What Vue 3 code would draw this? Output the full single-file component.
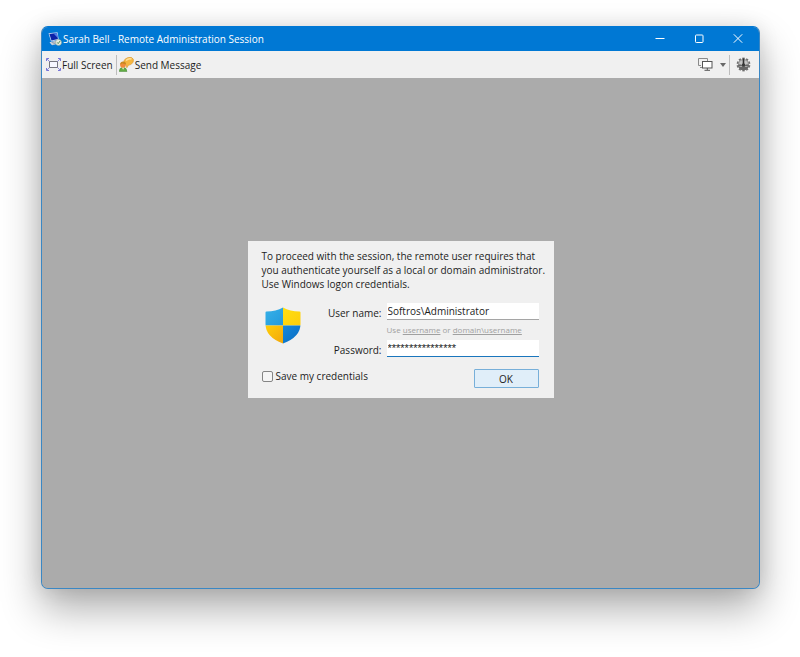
<script setup>
import { ref } from 'vue'

const userName = ref('Softros\\Administrator')
const password = ref('****************')
const save = ref(false)
const teeth = [0, 36, 72, 108, 144, 180, 216, 252, 288, 324]
</script>

<template>
  <main class="desktop">
    <section class="window">
      <header class="titlebar">
        <svg class="app-icon" viewBox="0 0 14 14" aria-hidden="true">
          <path d="M.5 1.200L9.500.3l1.300 7.400L3 9.400z" fill="#c9dcf3" />
          <path d="M1.400 1.900l7.500-.8 1 5.900L3.500 8.400z" fill="#0d22a8" />
          <path d="M5.500 1.500l3.400-.4.900 5z" fill="#4f7de8" />
          <path d="M1.500 10.200l8-1.900 3 2.700-8.500 2.300z" fill="#d5dbe4" />
          <path d="M3.500 10.700l5.500-1.200M4.500 12l5.500-1.300" stroke="#7d8b9d" stroke-width=".7" />
          <circle cx="10.500" cy="10.400" r="3" fill="#e8eee4" stroke="#8aa088" stroke-width=".5" />
          <path d="M9.200 10.400l1 1.200 1.900-2.600" fill="none" stroke="#3f7f45" stroke-width=".9" />
        </svg>
        <h1 class="title">Sarah Bell - Remote Administration Session</h1>
        <div class="caption-buttons">
          <button type="button" aria-label="Minimize">
            <svg viewBox="0 0 10 10"><path d="M.5 4.500h9" /></svg>
          </button>
          <button type="button" aria-label="Maximize">
            <svg viewBox="0 0 10 10"><rect x="1.500" y="1" width="7.500" height="7.500" rx=".8" /></svg>
          </button>
          <button type="button" aria-label="Close">
            <svg viewBox="0 0 10 10"><path d="M.8.300l8.400 8.400M9.200.300L.8 8.700" /></svg>
          </button>
        </div>
      </header>

      <nav class="toolbar">
        <button type="button" class="tool">
          <svg class="icon-full" viewBox="0 0 15 13" aria-hidden="true">
            <rect x="3.500" y="3.500" width="8" height="6" fill="#f7f7ff" stroke="#77777f" />
            <path d="M1 1l2.500 2.500M14 1l-2.500 2.500M1 12l2.500-2.500M14 12l-2.500-2.500" stroke="#8c8ae0" />
            <path d="M.5 3v-2.500h2.500M12 .5h2.500v2.500M.5 10v2.500h2.500M12 12.500h2.500v-2.500" fill="none" stroke="#7775d6" />
          </svg>
          <span>Full Screen</span>
        </button>
        <span class="separator"></span>
        <button type="button" class="tool">
          <svg class="icon-message" viewBox="0 0 15 15" aria-hidden="true">
            <path d="M6 2.200Q9-.4 12.500.5q3 1.300 1.600 4.600Q12.700 8 9.400 8.300L7.800 10.800l-.6-3Q3.200 5.500 6 2.200z" fill="#f6b740" stroke="#d9952a" stroke-width=".6" />
            <path d="M7 3.500Q9.500 1 12.500 2" fill="none" stroke="#ffe09a" stroke-width="1.500" />
            <path d="M.3 14.600Q.2 10.500 4 10.200q3.800.2 3.900 4.400z" fill="#62ad45" stroke="#3f8230" stroke-width=".5" />
            <path d="M2.700 10.300l1.400 2.500 1.400-2.500z" fill="#f5edcf" />
            <circle cx="4" cy="7.800" r="2.900" fill="#f08c3a" />
            <path d="M1.100 7.500Q1.500 4.500 4.200 4.600 7 4.700 7 7.200 4.700 7.500 3.600 6.300 3 7.400 1.100 7.500z" fill="#c98a20" />
          </svg>
          <span>Send Message</span>
        </button>
        <div class="tool-end">
          <button type="button" class="tool" aria-label="Displays">
            <svg class="icon-screens" viewBox="0 0 15 13" aria-hidden="true">
              <path d="M3 7.500H.5v-7h9V3" fill="none" stroke="#8a8a8a" />
              <path d="M2 9.500h2" stroke="#8a8a8a" />
              <rect x="4.500" y="3.500" width="9.500" height="6.500" fill="#fff" stroke="#555" />
              <path d="M9.300 10v2M6.500 12.300h5.500" stroke="#555" />
            </svg>
          </button>
          <button type="button" class="tool arrow" aria-label="Choose display">
            <svg class="icon-arrow" viewBox="0 0 6 4" aria-hidden="true"><path d="M0 0h6L3 4z" fill="#686868" /></svg>
          </button>
          <span class="separator"></span>
          <button type="button" class="tool gear" aria-label="Settings">
            <svg class="icon-gear" viewBox="0 0 15 15" aria-hidden="true">
              <rect v-for="a in teeth" :key="a" x="6.300" y=".6" width="2.400" height="3" fill="#707070" :transform="`rotate(${a} 7.500 7.500)`" />
              <circle cx="7.500" cy="7.500" r="5.500" fill="#999" />
              <path d="M2 7.800a5.500 5.500 0 0 0 11 0z" fill="#666" />
              <path d="M3 6.500a4.700 4.700 0 0 1 9 0L7.500 8.500z" fill="#c6c6c6" />
              <path d="M7.500 1.500v6" stroke="#303030" stroke-width="1.600" />
              <circle cx="7.500" cy="7.800" r="1.600" fill="#3a3a3a" />
              <path d="M3.500 9.500h2.500M9 9.500h2.500" stroke="#aaa" />
            </svg>
          </button>
        </div>
      </nav>

      <div class="session">
        <form class="dialog" @submit.prevent>
          <p class="intro">
            To proceed with the session, the remote user requires that<br />
            you authenticate yourself as a local or domain administrator.<br />
            Use Windows logon credentials.
          </p>
          <div class="credentials">
            <svg class="shield" viewBox="0 0 36 37" aria-hidden="true">
              <defs>
                <clipPath id="shield-shape">
                  <path d="M18 .5Q25 4.500 34.500 4.500 35.500 4.500 35.500 5.500V17Q35.500 30 18 36.500.5 30 .5 17V5.500Q.5 4.500 1.500 4.500 11 4.500 18 .5z" />
                </clipPath>
                <linearGradient id="blue-top" x2="1" y2="1"><stop stop-color="#38b2e8" /><stop offset="1" stop-color="#2299dd" /></linearGradient>
                <linearGradient id="blue-low" x2="1" y2="1"><stop stop-color="#1689dc" /><stop offset="1" stop-color="#086abf" /></linearGradient>
                <linearGradient id="gold-top" x2="1" y2="1"><stop stop-color="#ffdf12" /><stop offset="1" stop-color="#fdcd0a" /></linearGradient>
                <linearGradient id="gold-low" x2="1" y2="1"><stop stop-color="#ffcf08" /><stop offset="1" stop-color="#f2a60c" /></linearGradient>
              </defs>
              <g clip-path="url(#shield-shape)">
                <rect width="18" height="18.500" fill="url(#blue-top)" />
                <rect x="18" width="18" height="18.500" fill="url(#gold-top)" />
                <rect y="18.500" width="18" height="18.500" fill="url(#gold-low)" />
                <rect x="18" y="18.500" width="18" height="18.500" fill="url(#blue-low)" />
              </g>
            </svg>
            <div class="fields">
              <label for="user">User name:</label>
              <input id="user" v-model="userName" type="text" autocomplete="off" />
              <p class="hint">Use <a href="#user">username</a> or <a href="#user">domain\username</a></p>
              <label for="pass">Password:</label>
              <input id="pass" v-model="password" class="secret" type="text" autocomplete="off" />
            </div>
          </div>
          <div class="actions">
            <label class="save"><input v-model="save" type="checkbox" />Save my credentials</label>
            <button type="submit" class="ok">OK</button>
          </div>
        </form>
      </div>
    </section>
  </main>
</template>

<style>
body {
  background: #fff;
}
</style>

<style scoped>
.desktop {
  box-sizing: border-box;
  display: flex;
  min-height: 100vh;
  padding: 26px 40px 68px 41px;
  overflow: hidden;
  color: #1c1c1c;
  font: 10px/14px "Open Sans", "Noto Sans", sans-serif;
}
.desktop * {
  box-sizing: border-box;
}
.window {
  flex: 1;
  display: flex;
  flex-direction: column;
  border: 1px solid #3a87c4;
  border-top-color: #0078d4;
  border-radius: 7px;
  overflow: hidden;
  background: #ababab;
  box-shadow: 0 20px 40px rgba(0, 0, 0, 0.32), 0 0 20px rgba(0, 0, 0, 0.1);
}
button {
  padding: 0;
  border: 0;
  background: none;
  color: inherit;
  font: inherit;
}
svg {
  display: block;
}
.titlebar {
  display: flex;
  align-items: center;
  height: 24px;
  padding: 0 2px 0 6px;
  background: #0078d4;
  color: #fff;
}
.app-icon {
  width: 14px;
  height: 14px;
}
.title {
  flex: 1;
  margin: 0 0 0 1px;
  font: inherit;
  white-space: nowrap;
}
.caption-buttons {
  display: flex;
}
.caption-buttons button {
  display: grid;
  place-items: center;
  width: 39px;
  height: 24px;
}
.caption-buttons svg {
  width: 10px;
  height: 10px;
  fill: none;
  stroke: #fff;
}
.toolbar {
  display: flex;
  align-items: center;
  height: 27px;
  padding: 0 8px 0 4px;
  background: #f0f0f0;
}
.tool {
  display: flex;
  align-items: center;
  gap: 1px;
  white-space: nowrap;
}
.separator {
  width: 1px;
  height: 20px;
  margin: 0 2px 0 3px;
  background: #bdbdbd;
}
.tool-end {
  display: flex;
  align-items: center;
  margin-left: auto;
}
.icon-full,
.icon-screens {
  width: 15px;
  height: 13px;
}
.icon-message,
.icon-gear {
  width: 15px;
  height: 15px;
}
.arrow {
  margin-left: 7px;
}
.icon-arrow {
  width: 6px;
  height: 4px;
}
.gear {
  margin-left: 4px;
}
.session {
  flex: 1;
  display: flex;
  align-items: center;
  justify-content: center;
  padding-bottom: 27px;
  background: #ababab;
}
.dialog {
  width: 306px;
  padding: 8px 15px 10px 14px;
  background: #f0f0f0;
}
p {
  margin: 0;
}
.intro {
  white-space: nowrap;
}
.credentials {
  display: flex;
  justify-content: space-between;
  margin-top: 11px;
}
.shield {
  width: 36px;
  height: 37px;
  margin: 5px 0 0 3px;
}
.fields {
  display: grid;
  grid-template-columns: auto 152px;
  column-gap: 5px;
  align-items: center;
}
.fields label {
  padding-top: 4px;
  text-align: right;
}
.fields input {
  width: 100%;
  height: 17px;
  padding: 0 1px;
  border: 0;
  border-bottom: 1px solid #a5a5a5;
  border-radius: 0;
  outline: 0;
  background: #fff;
  color: inherit;
  font: inherit;
}
.fields .secret {
  border-bottom: 1px solid #1a76bd;
  font-family: "Liberation Sans", sans-serif;
  font-size: 11px;
}
.hint {
  grid-column: 2;
  height: 19px;
  color: #a0a0a0;
  font-size: 8px;
  line-height: 20px;
  white-space: nowrap;
}
.hint a {
  color: inherit;
}
.actions {
  display: flex;
  align-items: flex-start;
  justify-content: space-between;
  margin-top: 12px;
}
.save {
  display: flex;
  align-items: center;
  gap: 3px;
}
.save input {
  appearance: none;
  width: 11px;
  height: 11px;
  margin: 0;
  border: 1px solid #858585;
  border-radius: 2px;
  background: #f5f5f5;
}
.save input:checked {
  background: #0078d4;
}
.ok {
  width: 65px;
  height: 19px;
  border: 1px solid #77afd9;
  border-radius: 1px;
  background: #e0eef9;
}
</style>
